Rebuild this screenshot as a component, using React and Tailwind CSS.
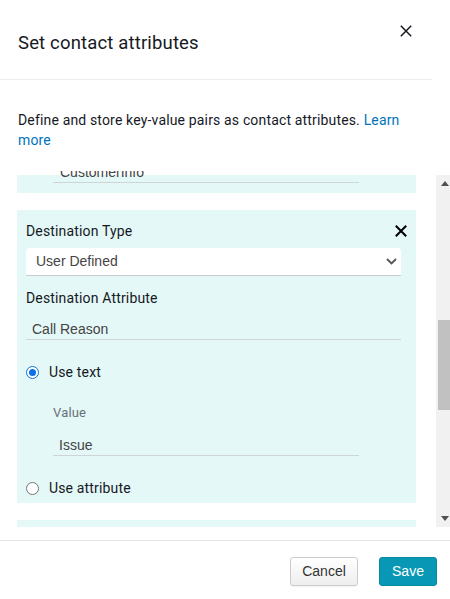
const ember = { fontFamily: "Roboto, 'Noto Sans', sans-serif", letterSpacing: "0.01em" };
const arial = { fontFamily: "'Liberation Sans', Arial, sans-serif", letterSpacing: "0" };

function Cross({ size = 12, width = 1.5 }) {
    return (
        <svg width={size} height={size} viewBox="0 0 12 12">
            <path d="M0.8 0.8 L11.2 11.2 M11.2 0.8 L0.8 11.2" stroke="currentColor" strokeWidth={width} fill="none" />
        </svg>
    );
}

function Radio({ checked, label, className = "" }) {
    return (
        <div className={"flex items-center h-[20px] " + className}>
            {checked ? (
                <span className="w-[13px] h-[13px] rounded-full border-[1.5px] border-[#0a6fd8] bg-white flex items-center justify-center">
                    <span className="w-[7px] h-[7px] rounded-full bg-[#0a6fe8]" />
                </span>
            ) : (
                <span className="w-[13px] h-[13px] rounded-full border border-[#767676] bg-white" />
            )}
            <span className="ml-[10px] text-[14px] text-[#16191f]">{label}</span>
        </div>
    );
}

function Scrollbar() {
    return (
        <div className="mt-[4px] w-[17px] shrink-0 h-[352px] bg-[#f1f1f1] flex flex-col">
            <div className="h-[17px] w-full flex items-center justify-center">
                <svg width="8" height="5" viewBox="0 0 8 5"><path d="M0 5 L4 0 L8 5 Z" fill="#505050" /></svg>
            </div>
            <div className="flex-1 w-full px-[2px] pt-[128px]">
                <div className="h-[90px] w-full bg-[#c1c1c1]" />
            </div>
            <div className="h-[17px] w-full flex items-center justify-center">
                <svg width="8" height="5" viewBox="0 0 8 5"><path d="M0 0 L8 0 L4 5 Z" fill="#505050" /></svg>
            </div>
        </div>
    );
}

export default function App() {
    return (
        <div className="w-[450px] h-[599px] overflow-hidden bg-white flex flex-col text-[#16191f]" style={ember}>
            {/* Header */}
            <div className="w-[432px] h-[80px] shrink-0 border-b border-[#eaeded] flex items-start justify-between pl-[18px] pr-[20px]">
                <h1 className="mt-[29px] text-[18.5px] leading-[28px] font-normal">Set contact attributes</h1>
                <button className="mt-[25px] text-[#16191f]">
                    <Cross size={12} width={1.5} />
                </button>
            </div>

            {/* Description */}
            <p className="px-[18px] pt-[30px] pb-[21px] text-[14px] leading-[20px] w-[420px] shrink-0">
                Define and store key-value pairs as contact attributes.{" "}
                <a className="text-[#0073bb]">Learn more</a>
            </p>

            {/* Scroll region */}
            <div className="h-[356px] shrink-0 flex">
                <div className="w-[436px] shrink-0 h-full overflow-hidden pl-[17px] pr-[20px] flex flex-col">
                    {/* tail of previous card */}
                    <div className="h-[22px] shrink-0 overflow-hidden flex items-end pl-[36px] bg-[linear-gradient(to_bottom,#ffffff_4px,#e4f8f7_4px)]">
                        <div className="w-[306px] h-[30px] shrink-0 border-b border-[#cfd4d6] pl-[7px] pt-[9px] mb-[10px] text-[14px] leading-[20px] text-[#444]" style={arial}>
                            CustomerInfo
                        </div>
                    </div>

                    {/* Current card */}
                    <div className="mt-[17px] h-[293px] shrink-0 bg-[#e4f8f7] pl-[9px] pr-[15px] pt-[11px]">
                        <div className="flex items-center justify-between h-[20px]">
                            <span className="text-[14px]">Destination Type</span>
                            <span className="text-black -mr-[6px]">
                                <Cross size={12} width={2} />
                            </span>
                        </div>
                        <div className="mt-[7px] h-[28px] bg-white rounded-t-[4px] border-b border-[#c8cccf] flex items-center justify-between pl-[10px] pr-[4px] text-[14px] text-[#444]" style={arial}>
                            <span>User Defined</span>
                            <svg width="11" height="7" viewBox="0 0 11 7"><path d="M1 1 L5.5 5.5 L10 1" fill="none" stroke="#555" strokeWidth="1.8" /></svg>
                        </div>
                        <div className="mt-[12px] h-[20px] flex items-center text-[14px]">Destination Attribute</div>
                        <div className="mt-[8px] h-[24px] border-b border-[#cfd4d6] pl-[6px] pt-[3px] leading-[20px] text-[14px] text-[#444]" style={arial}>
                            Call Reason
                        </div>
                        <Radio checked label="Use text" className="mt-[22px]" />
                        <div className="pl-[27px] mr-[42px]">
                            <div className="mt-[22px] h-[18px] flex items-center text-[13px] text-[#687078]">Value</div>
                            <div className="mt-[10px] h-[24px] border-b border-[#cfd4d6] pl-[6px] pt-[3px] leading-[20px] text-[14px] text-[#444]" style={arial}>
                                Issue
                            </div>
                        </div>
                        <Radio label="Use attribute" className="mt-[22px]" />
                    </div>

                    {/* next card */}
                    <div className="mt-[17px] h-[40px] shrink-0 bg-[#e4f8f7]" />
                </div>
                <Scrollbar />
            </div>

            {/* Footer */}
            <div className="mt-[13px] border-t border-[#e1e4e5] flex justify-end gap-[21px] pt-[16px] pr-[13px]" style={arial}>
                <button className="h-[29px] w-[68px] rounded-[3px] border border-[#cccccc] bg-gradient-to-b from-white to-[#eeeeee] text-[14px] text-[#333] shadow-[0_1px_1px_rgba(0,0,0,0.05)]">
                    Cancel
                </button>
                <button className="h-[29px] w-[58px] rounded-[3px] border border-[#088aa3] bg-[#0898b6] text-[14px] text-white">
                    Save
                </button>
            </div>
        </div>
    );
}
